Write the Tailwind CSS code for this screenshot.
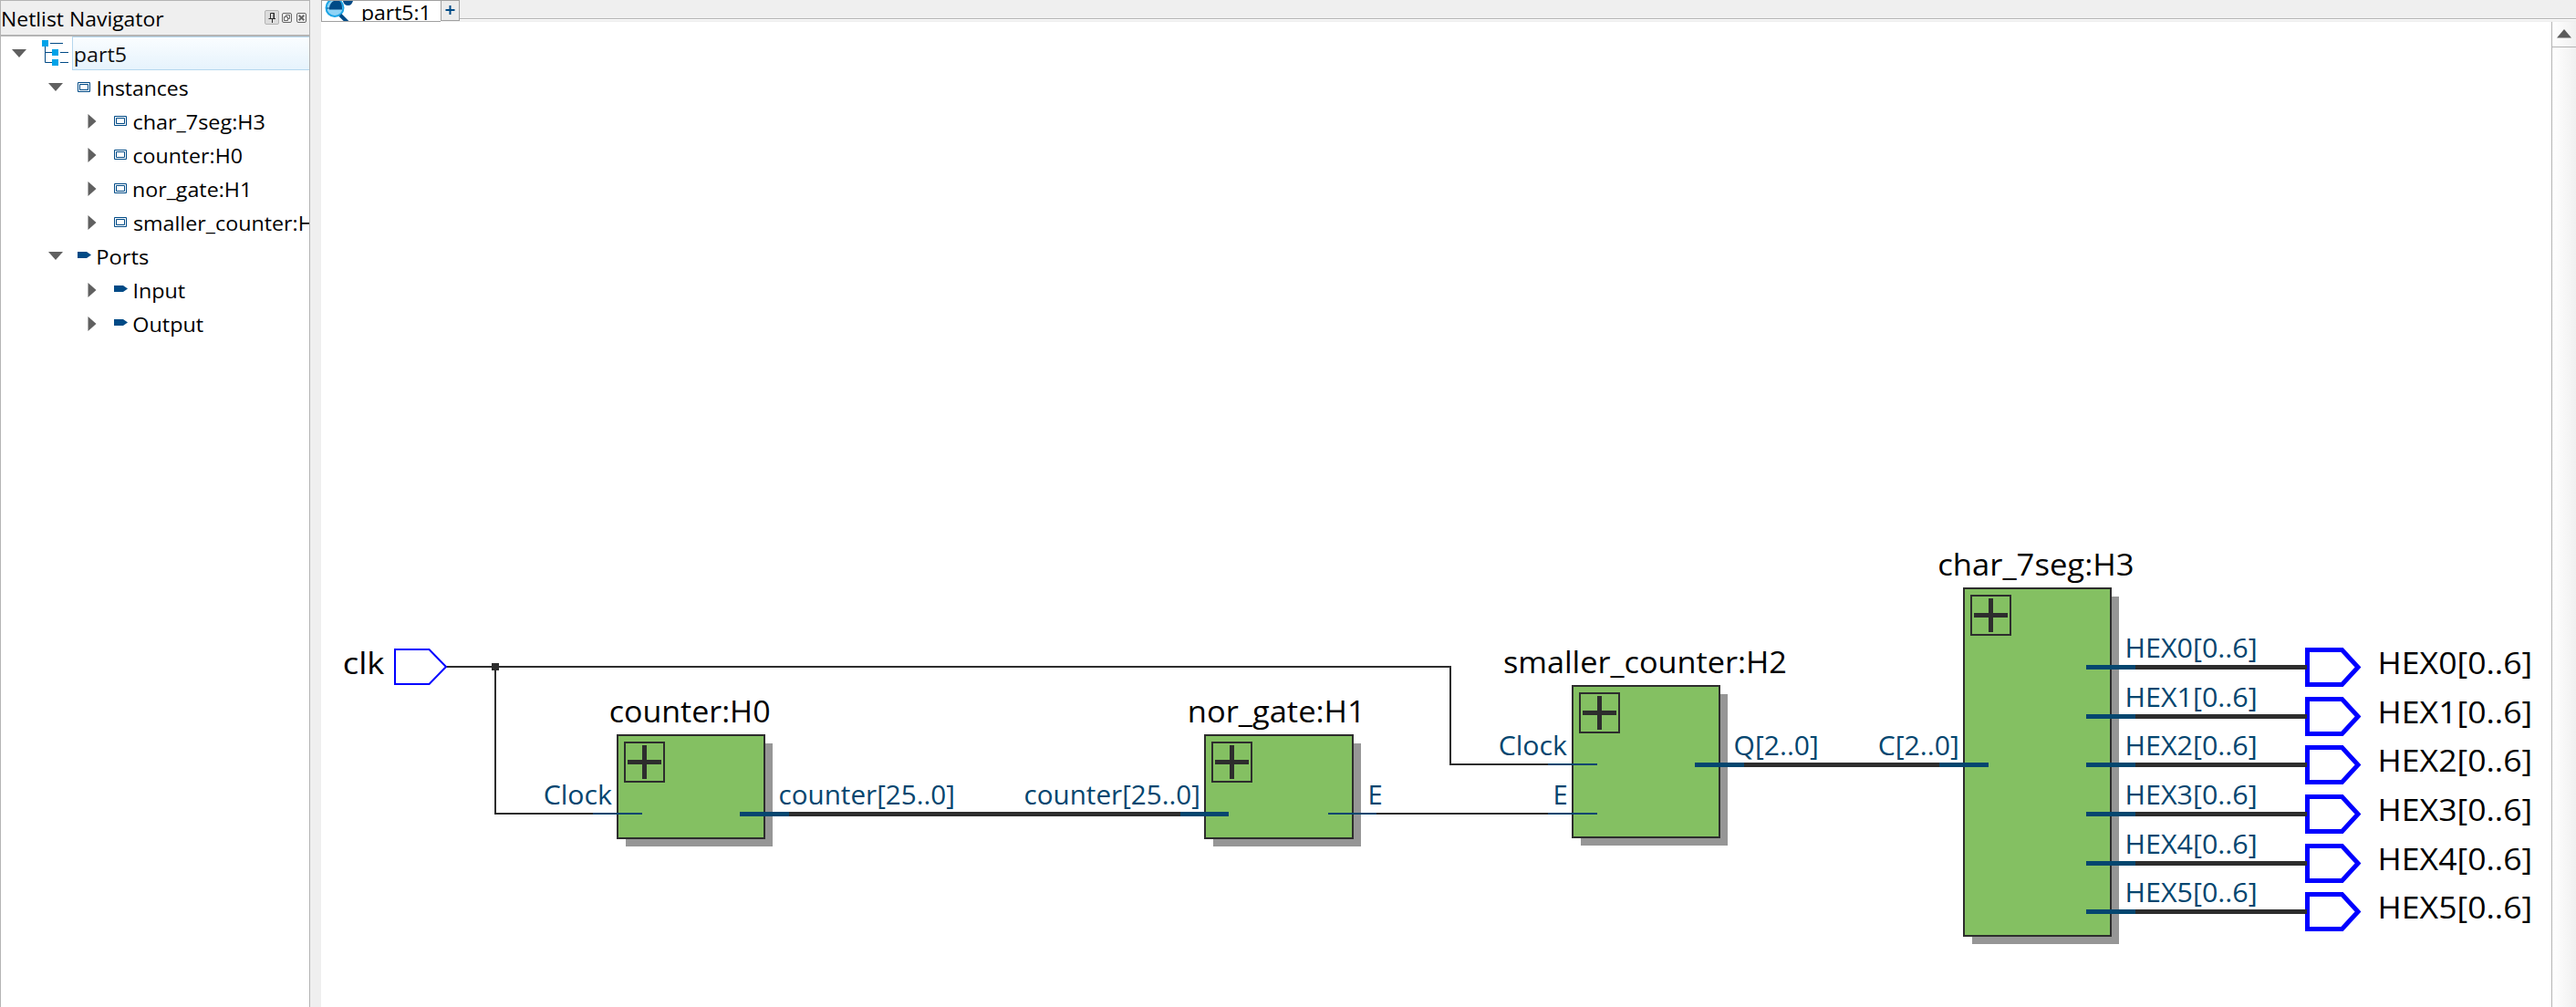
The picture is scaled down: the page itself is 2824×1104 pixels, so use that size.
<!DOCTYPE html>
<html lang="en">
<head>
<meta charset="utf-8">
<title>Netlist Navigator</title>
<script src="https://cdn.jsdelivr.net/npm/@tailwindcss/browser@4"></script>
</head>
<body class="flex h-[1104px] w-[2824px] overflow-hidden bg-[#efefef] font-['Open_Sans','Noto_Sans',sans-serif] text-black">

<!-- shared symbols -->
<svg class="hidden">
  <symbol id="down" viewBox="0 0 16 9"><path d="M0 0H16L8 9Z" fill="#606060"/></symbol>
  <symbol id="right" viewBox="0 0 10 16"><path d="M0.5 0L9.5 8L0.5 16Z" fill="#606060"/></symbol>
  <symbol id="inst" viewBox="0 0 14 11"><path d="M.5 .5h13v10h-13zM2.5 2.5h9v6h-9z" fill="#fff" stroke="#004a86"/></symbol>
  <symbol id="port" viewBox="0 0 15 7"><path d="M0 0H10L15 3.5L10 7H0Z" fill="#004a86"/></symbol>
  <symbol id="expand" viewBox="0 0 45 45"><path d="M1 1H44V44H1Z" fill="none" stroke="#2d2d2d" stroke-width="2"/><path d="M4 22.500H41M22.500 4V41" stroke="#2d2d2d" stroke-width="5"/></symbol>
  <symbol id="out" viewBox="0 0 64 43"><path d="M2.500 2.500H40.500L58 21.500L40.500 40.500H2.500Z" fill="#fff" stroke="#00f" stroke-width="5"/></symbol>
</svg>

<!-- navigator panel -->
<aside class="flex h-full w-[340px] shrink-0 flex-col overflow-hidden border-x border-t border-[#b4b4b4] bg-white">
  <header class="flex h-[39px] shrink-0 items-start border-b-2 border-[#b4b4b4] bg-[#efefef]">
    <svg class="h-[37px] w-[289px] shrink-0" font-size="22"><text data-l="2.500" data-r="179.500" x="2" y="28">Netlist Navigator</text></svg>
    <svg class="mt-[10px] h-4 w-4 shrink-0" viewBox="0 0 16 16" fill="none"><rect x=".5" y=".5" width="15" height="15" rx="1.500" fill="#dcdcdc" stroke="#b4b4b4"/><path d="M6.500 9V3.500H10.500V9M10 3V9M4.500 9.500H12M8.500 10V14" stroke="#2a2a2a"/></svg>
    <svg class="mt-[13px] ml-[3px] h-[11px] w-[11px] shrink-0" viewBox="0 0 11 11" fill="none" stroke="#666"><rect x=".5" y=".5" width="10" height="10" rx="1.500"/><path d="M4.500 4V2.500H8.500V6.500H7M2.500 4.500H6.500V8.500H2.500Z"/></svg>
    <svg class="mt-[13px] ml-[5px] h-[11px] w-[11px] shrink-0" viewBox="0 0 11 11" fill="none" stroke="#666"><rect x=".5" y=".5" width="10" height="10" rx="1.500"/><path d="M2.700 2.700L8.300 8.300M8.300 2.700L2.700 8.300" stroke-width="2"/></svg>
  </header>
  <div class="flex flex-col">
    <div class="flex h-[37px]">
      <svg class="mt-[14px] ml-3 h-[9px] w-4 shrink-0"><use href="#down"/></svg>
      <svg class="mt-1 ml-[17px] h-7 w-[29px] shrink-0" viewBox="0 0 29 28"><path d="M9 3.500H23M3.500 7V24.500H12M3.500 13.500H12M20 13.500H29M20 24.500H29" fill="none" stroke="#004a86"/><path d="M0 0h7v7h-7zM11 10h7v7h-7zM11 21h7v7h-7z" fill="#00a3e8"/></svg>
      <div class="ml-1 h-[37px] flex-1 border-y border-l border-[#b5d7ee] bg-linear-to-b from-[#fafdff] to-[#e6f3fc]"><svg class="h-[35px] w-[258px]" font-size="22"><text data-l="3.500" data-r="59" x="3" y="27" fill="#111">part5</text></svg></div>
    </div>
    <div class="flex h-[37px]">
      <svg class="mt-[14px] ml-[52px] h-[9px] w-4 shrink-0"><use href="#down"/></svg>
      <svg class="mt-[13px] ml-4 h-[11px] w-[14px] shrink-0"><use href="#inst"/></svg>
      <svg class="h-[37px] w-[240px] shrink-0" font-size="22"><text data-l="9" data-r="107" x="7" y="28">Instances</text></svg>
    </div>
    <div class="flex h-[37px]">
      <svg class="mt-[11px] ml-[95px] h-4 w-[10px] shrink-0"><use href="#right"/></svg>
      <svg class="mt-[13px] ml-[19px] h-[11px] w-[14px] shrink-0"><use href="#inst"/></svg>
      <svg class="h-[37px] w-[200px] shrink-0" font-size="22"><text data-l="8" data-r="152" x="7" y="28">char_7seg:H3</text></svg>
    </div>
    <div class="flex h-[37px]">
      <svg class="mt-[11px] ml-[95px] h-4 w-[10px] shrink-0"><use href="#right"/></svg>
      <svg class="mt-[13px] ml-[19px] h-[11px] w-[14px] shrink-0"><use href="#inst"/></svg>
      <svg class="h-[37px] w-[200px] shrink-0" font-size="22"><text data-l="8" data-r="127" x="7" y="28">counter:H0</text></svg>
    </div>
    <div class="flex h-[37px]">
      <svg class="mt-[11px] ml-[95px] h-4 w-[10px] shrink-0"><use href="#right"/></svg>
      <svg class="mt-[13px] ml-[19px] h-[11px] w-[14px] shrink-0"><use href="#inst"/></svg>
      <svg class="h-[37px] w-[200px] shrink-0" font-size="22"><text data-l="8.500" data-r="136" x="7" y="28">nor_gate:H1</text></svg>
    </div>
    <div class="flex h-[37px]">
      <svg class="mt-[11px] ml-[95px] h-4 w-[10px] shrink-0"><use href="#right"/></svg>
      <svg class="mt-[13px] ml-[19px] h-[11px] w-[14px] shrink-0"><use href="#inst"/></svg>
      <svg class="h-[37px] w-[240px] shrink-0" font-size="22"><text data-l="8" data-r="217" x="7" y="28">smaller_counter:H2</text></svg>
    </div>
    <div class="flex h-[37px]">
      <svg class="mt-[14px] ml-[52px] h-[9px] w-4 shrink-0"><use href="#down"/></svg>
      <svg class="mt-[14px] ml-4 h-[7px] w-[15px] shrink-0"><use href="#port"/></svg>
      <svg class="h-[37px] w-[200px] shrink-0" font-size="22"><text data-l="8" data-r="62.500" x="7" y="28">Ports</text></svg>
    </div>
    <div class="flex h-[37px]">
      <svg class="mt-[11px] ml-[95px] h-4 w-[10px] shrink-0"><use href="#right"/></svg>
      <svg class="mt-[14px] ml-[19px] h-[7px] w-[15px] shrink-0"><use href="#port"/></svg>
      <svg class="h-[37px] w-[199px] shrink-0" font-size="22"><text data-l="8" data-r="63" x="7" y="28">Input</text></svg>
    </div>
    <div class="flex h-[37px]">
      <svg class="mt-[11px] ml-[95px] h-4 w-[10px] shrink-0"><use href="#right"/></svg>
      <svg class="mt-[14px] ml-[19px] h-[7px] w-[15px] shrink-0"><use href="#port"/></svg>
      <svg class="h-[37px] w-[199px] shrink-0" font-size="22"><text data-l="7" data-r="83" x="7" y="28">Output</text></svg>
    </div>
  </div>
</aside>

<!-- schematic area -->
<main class="ml-3 flex h-full w-[2472px] shrink-0 flex-col">
  <div class="flex h-6 shrink-0">
    <div class="flex h-6 w-[131px] shrink-0 border border-r-0 border-[#a0a0a0] bg-white">
      <svg class="h-[22px] w-[130px]" font-size="22">
        <circle cx="14" cy="7.500" r="9.500" fill="#8fd3f5" stroke="#1ba5e6" stroke-width="2"/>
        <path d="M5 7.500H8C8.500 3.500 10.500 1 13 0H19C21 1.500 22 4 22 7.500V9.500H8V8.500H5Z" fill="#004a86"/>
        <path d="M23 0H34C33 3 31.500 5 28.500 5C25.500 5 23.500 3 23 0Z" fill="#004a86"/>
        <path d="M20 15.500L28 23.500" stroke="#004a86" stroke-width="4"/>
        <text data-l="45.500" data-r="118.500" x="45" y="21">part5:1</text>
      </svg>
    </div>
    <div class="flex h-[23px] w-[21px] shrink-0 border border-[#a0a0a0] bg-[#ececec]">
      <svg class="h-[21px] w-[19px]"><path d="M4.500 10H14.500M9.500 5V15" stroke="#004a86" stroke-width="2"/></svg>
    </div>
    <div class="flex h-6 flex-1 flex-col pt-5"><div class="h-px bg-[#b4b4b4]"></div><div class="h-px bg-white"></div></div>
  </div>

  <div class="flex flex-1">
    <svg class="h-[1080px] w-[2445px] shrink-0 bg-white" viewBox="352 24 2445 1080">
      <!-- drop shadows -->
      <path d="M686 815H847V928H686ZM1330 815H1492V928H1330ZM1733 761H1894V927H1733ZM2162 654H2323V1035H2162Z" fill="#969696"/>
      <!-- blocks -->
      <g fill="#84c062" stroke="#2d2d2d" stroke-width="2">
        <rect x="677" y="806" width="161" height="113"/>
        <rect x="1321" y="806" width="162" height="113"/>
        <rect x="1724" y="752" width="161" height="166"/>
        <rect x="2153" y="645" width="161" height="381"/>
      </g>
      <use href="#expand" x="684" y="813" width="45" height="45"/>
      <use href="#expand" x="1328" y="813" width="45" height="45"/>
      <use href="#expand" x="1731" y="759" width="45" height="45"/>
      <use href="#expand" x="2160" y="652" width="45" height="45"/>
      <!-- nets -->
      <g fill="none" stroke="#2d2d2d" stroke-width="2">
        <path d="M489 731H1590V838H1697M543 731V892H650M1509 892H1697"/>
        <path d="M865 892.500H1294M1912 838.500H2126M2341 731.500H2529M2341 785.500H2529M2341 838.500H2529M2341 892.500H2529M2341 946.500H2529M2341 999.500H2529" stroke-width="5"/>
      </g>
      <rect x="539" y="727" width="8" height="8" fill="#2d2d2d"/>
      <!-- pins -->
      <g fill="none" stroke="#04466f" stroke-width="2">
        <path d="M650 892H704M1456 892H1509M1697 838H1751M1697 892H1751"/>
        <path d="M811 892.500H865M1294 892.500H1347M1858 838.500H1912M2126 838.500H2180M2287 731.500H2341M2287 785.500H2341M2287 838.500H2341M2287 892.500H2341M2287 946.500H2341M2287 999.500H2341" stroke-width="5"/>
      </g>
      <!-- ports -->
      <path d="M433 712H470.500L489 731L470.500 750H433Z" fill="#fff" stroke="#00f" stroke-width="2"/>
      <use href="#out" x="2527" y="710" width="64" height="43"/>
      <use href="#out" x="2527" y="764" width="64" height="43"/>
      <use href="#out" x="2527" y="817" width="64" height="43"/>
      <use href="#out" x="2527" y="871" width="64" height="43"/>
      <use href="#out" x="2527" y="925" width="64" height="43"/>
      <use href="#out" x="2527" y="978" width="64" height="43"/>
      <path d="M2526 731.500H2529M2526 785.500H2529M2526 838.500H2529M2526 892.500H2529M2526 946.500H2529M2526 999.500H2529" stroke="#2d2d2d" stroke-width="5"/>
      <!-- names -->
      <g font-size="33">
        <text data-l="378" data-r="422" x="378" y="739">clk</text>
        <text data-l="670" data-r="844" x="670" y="792">counter:H0</text>
        <text data-l="1305.500" data-r="1495" x="1305" y="792">nor_gate:H1</text>
        <text data-l="1649.500" data-r="1957" x="1649" y="738">smaller_counter:H2</text>
        <text data-l="2126.500" data-r="2339" x="2126" y="631">char_7seg:H3</text>
        <text data-l="2610" data-r="2774" x="2607" y="739">HEX0[0..6]</text>
        <text data-l="2610" data-r="2774" x="2607" y="793">HEX1[0..6]</text>
        <text data-l="2610" data-r="2774" x="2607" y="846">HEX2[0..6]</text>
        <text data-l="2610" data-r="2774" x="2607" y="900">HEX3[0..6]</text>
        <text data-l="2610" data-r="2774" x="2607" y="954">HEX4[0..6]</text>
        <text data-l="2610" data-r="2774" x="2607" y="1007">HEX5[0..6]</text>
      </g>
      <!-- pin names -->
      <g font-size="29" fill="#04466f">
        <text data-l="597.500" data-r="671.500" x="597" y="882">Clock</text>
        <text data-l="855.500" data-r="1045" x="855" y="882">counter[25..0]</text>
        <text data-l="1124.500" data-r="1314" x="1124" y="882">counter[25..0]</text>
        <text data-l="1502" data-r="1515" x="1499" y="882">E</text>
        <text data-l="1644.500" data-r="1718.500" x="1644" y="828">Clock</text>
        <text data-l="1705" data-r="1718" x="1702" y="882">E</text>
        <text data-l="1902.500" data-r="1992" x="1902" y="828">Q[2..0]</text>
        <text data-l="2060.500" data-r="2146" x="2060" y="828">C[2..0]</text>
        <text data-l="2332.500" data-r="2473" x="2330" y="721">HEX0[0..6]</text>
        <text data-l="2332.500" data-r="2473" x="2330" y="775">HEX1[0..6]</text>
        <text data-l="2332.500" data-r="2473" x="2330" y="828">HEX2[0..6]</text>
        <text data-l="2332.500" data-r="2473" x="2330" y="882">HEX3[0..6]</text>
        <text data-l="2332.500" data-r="2473" x="2330" y="936">HEX4[0..6]</text>
        <text data-l="2332.500" data-r="2473" x="2330" y="989">HEX5[0..6]</text>
      </g>
    </svg>

    <!-- scrollbar -->
    <div class="flex w-[27px] flex-col border-l border-[#b4b4b4] bg-linear-to-r from-white to-[#f0f0f0]">
      <div class="flex h-7 justify-center border-b border-[#b4b4b4] pt-2"><svg class="h-[10px] w-4"><path d="M8 0L16 9.500H0Z" fill="#5c5c5c"/></svg></div>
    </div>
  </div>
</main>

<script>
  // Fit every label between its left and right ink edges.
  // Left side bearing of the first glyph, in em.
  const bearing = ch => 'HEINPnp'.includes(ch) ? 0.095 : 'cCOQ'.includes(ch) ? 0.058 : 0.04;
  const ctx = document.createElement('canvas').getContext('2d');
  document.querySelectorAll('text[data-l]').forEach(t => {
    const cs = getComputedStyle(t);
    ctx.font = cs.fontSize + ' ' + cs.fontFamily;
    const m = ctx.measureText(t.textContent);
    const l = +t.dataset.l, r = +t.dataset.r;
    const lsb = bearing(t.textContent[0]) * parseFloat(cs.fontSize);
    const k = (r - l) / (m.actualBoundingBoxRight - lsb);
    t.setAttribute('x', l - lsb * k);
    t.setAttribute('textLength', m.width * k);
    t.setAttribute('lengthAdjust', 'spacingAndGlyphs');
  });
</script>
</body>
</html>
